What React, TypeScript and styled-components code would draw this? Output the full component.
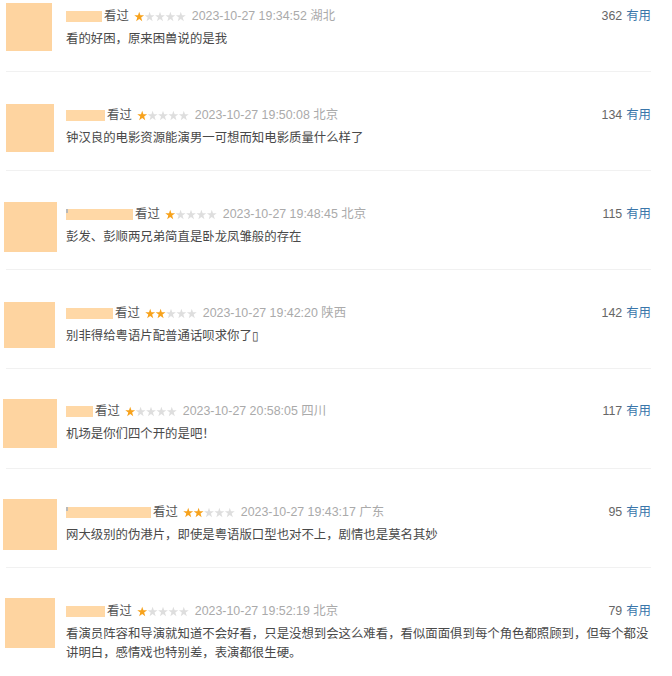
import React from "react";
import styled, { createGlobalStyle } from "styled-components";

const Global = createGlobalStyle`
  html, body { margin: 0; padding: 0; background: #fff; }
  body { font-family: "Liberation Sans", Arial, "Noto Sans CJK SC", sans-serif; }
`;

const List = styled.div`
  margin-left: 6px;
  width: 645px;
`;

const Item = styled.div<{ $pt: number; $h: number }>`
  box-sizing: border-box;
  height: ${(p) => p.$h}px;
  padding-top: ${(p) => p.$pt}px;
  display: grid;
  grid-template-columns: 60px 1fr;
  align-items: start;
  border-bottom: 1px solid #f1f1f1;
  &:last-child { border-bottom: none; height: auto; }
`;

const Avatar = styled.div<{ $w: number; $h: number; $x: number; $y: number }>`
  width: ${(p) => p.$w}px;
  height: ${(p) => p.$h}px;
  margin-left: ${(p) => p.$x}px;
  margin-top: ${(p) => p.$y}px;
  background: #fed4a0;
`;

const Main = styled.div`
  padding-top: 4px;
  min-width: 0;
`;

const Header = styled.div`
  display: flex;
  align-items: center;
  height: 18px;
  font-size: 12.4px;
  line-height: 18px;
  white-space: nowrap;
`;

const Name = styled.span<{ $w: number; $mark?: boolean }>`
  position: relative;
  display: inline-block;
  width: ${(p) => p.$w}px;
  height: 11px;
  background: #ffd8a6;
  margin-right: 2px;
  ${(p) =>
    p.$mark
      ? `&::before { content: ""; position: absolute; left: 0; top: 0; width: 2px; height: 4px; background: #b9b9b9; }`
      : ""}
`;

const Watched = styled.span`
  color: #555;
`;

const Stars = styled.svg`
  margin-left: 5px;
  flex: none;
`;

const DateText = styled.span`
  margin-left: 6px;
  color: #aaa;
`;

const Votes = styled.span`
  margin-left: auto;
  color: #666;
`;

const Useful = styled.a`
  color: #3a76aa;
  text-decoration: none;
  margin-left: 4px;
`;

const Content = styled.p`
  margin: 5px 0 0;
  font-size: 12.4px;
  line-height: 19px;
  color: #494949;
  word-break: break-all;
`;

const STAR =
  "12,0.6 14.76,8.8 23.41,8.89 16.47,14.05 19.05,22.31 12,17.3 4.95,22.31 7.53,14.05 0.59,8.89 9.24,8.8";

function Rating({ n }: { n: number }) {
  return (
    <Stars width="52" height="11" viewBox="0 0 120 25.4">
      {[0, 1, 2, 3, 4].map((i) => (
        <polygon
          key={i}
          points={STAR}
          transform={`translate(${i * 24} 1.2)`}
          fill={i < n ? "#f7a21c" : "#dedede"}
        />
      ))}
    </Stars>
  );
}

type C = {
  name: number;
  mark?: boolean;
  stars: number;
  date: string;
  votes: number;
  text: string;
  av: [number, number, number, number];
  pt: number;
  h: number;
};

const comments: C[] = [
  { name: 36, stars: 1, date: "2023-10-27 19:34:52 湖北", votes: 362, text: "看的好困，原来困兽说的是我", av: [46, 48, 0, 0], pt: 3, h: 72 },
  { name: 39, stars: 1, date: "2023-10-27 19:50:08 北京", votes: 134, text: "钟汉良的电影资源能演男一可想而知电影质量什么样了", av: [48, 48, 0, 2], pt: 30, h: 99 },
  { name: 67, mark: true, stars: 1, date: "2023-10-27 19:48:45 北京", votes: 115, text: "彭发、彭顺两兄弟简直是卧龙凤雏般的存在", av: [53, 50, -2, 1], pt: 30, h: 99 },
  { name: 47, stars: 2, date: "2023-10-27 19:42:20 陕西", votes: 142, text: "别非得给粤语片配普通话呗求你了▯", av: [51, 46, -2, 2], pt: 30, h: 99 },
  { name: 27, stars: 1, date: "2023-10-27 20:58:05 四川", votes: 117, text: "机场是你们四个开的是吧！", av: [54, 49, -3, 1], pt: 29, h: 100 },
  { name: 85, mark: true, stars: 2, date: "2023-10-27 19:43:17 广东", votes: 95, text: "网大级别的伪港片，即使是粤语版口型也对不上，剧情也是莫名其妙", av: [54, 51, -3, 0], pt: 30, h: 99 },
  { name: 39, stars: 1, date: "2023-10-27 19:52:19 北京", votes: 79, text: "看演员阵容和导演就知道不会好看，只是没想到会这么难看，看似面面俱到每个角色都照顾到，但每个都没讲明白，感情戏也特别差，表演都很生硬。", av: [50, 50, -1, 0], pt: 30, h: 99 },
];

export default function App() {
  return (
    <>
      <Global />
      <List>
        {comments.map((c, i) => (
          <Item key={i} $pt={c.pt} $h={c.h}>
            <Avatar $w={c.av[0]} $h={c.av[1]} $x={c.av[2]} $y={c.av[3]} />
            <Main>
              <Header>
                <Name $w={c.name} $mark={c.mark} />
                <Watched>看过</Watched>
                <Rating n={c.stars} />
                <DateText>{c.date}</DateText>
                <Votes>
                  {c.votes}
                  <Useful href="#">有用</Useful>
                </Votes>
              </Header>
              <Content>{c.text}</Content>
            </Main>
          </Item>
        ))}
      </List>
    </>
  );
}
